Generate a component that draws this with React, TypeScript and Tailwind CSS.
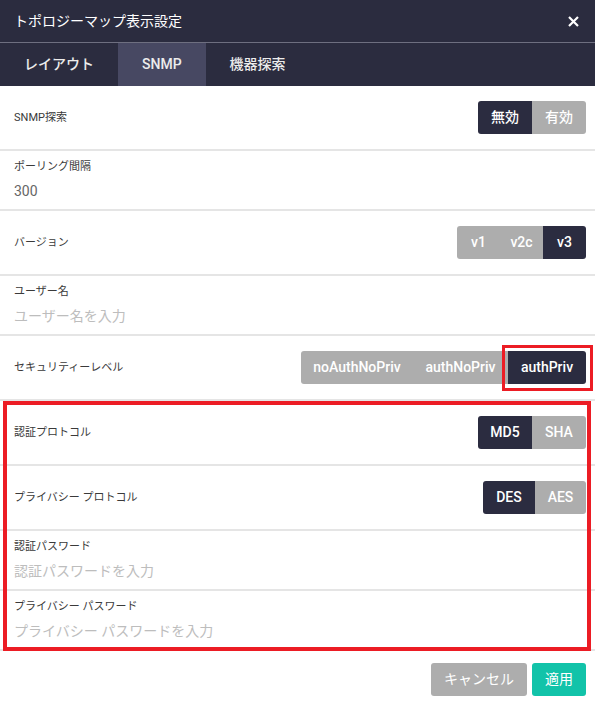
import { useState } from "react";

const font = { fontFamily: 'Roboto, "Noto Sans CJK JP", sans-serif' };

function Toggle({
  options,
  value,
  onChange,
  widths,
}: {
  options: string[];
  value: string;
  onChange: (v: string) => void;
  widths: string[];
}) {
  return (
    <div className="flex h-[33px] overflow-hidden rounded-[3px]">
      {options.map((opt, i) => (
        <button
          key={opt}
          onClick={() => onChange(opt)}
          className={`${widths[i]} flex items-center justify-center text-[14px] font-medium text-white ${
            value === opt ? "bg-[#2b2c40]" : "bg-[#adadad]"
          }`}
        >
          {opt}
        </button>
      ))}
    </div>
  );
}

function ToggleRow({ label, children }: { label: string; children: React.ReactNode }) {
  return (
    <div className="flex h-[65px] items-center justify-between border-b-2 border-[#e5e5e5] pl-[14px] pr-[9px]">
      <span className="pt-[2px] text-[11px] text-[#3a3a3a]">{label}</span>
      {children}
    </div>
  );
}

function InputRow({ label, placeholder, value }: { label: string; placeholder?: string; value?: string }) {
  return (
    <div className="flex h-[60px] flex-col border-b-2 border-[#e5e5e5] px-[14px] pt-[8px]">
      <span className="text-[11px] leading-[16px] text-[#3a3a3a]">{label}</span>
      <input
        className="mt-[3px] h-[26px] bg-transparent text-[14px] text-[#666] outline-none placeholder:text-[#bdbdbd]"
        placeholder={placeholder}
        defaultValue={value}
        style={font}
      />
    </div>
  );
}

function App() {
  const [tab, setTab] = useState("SNMP");
  const [search, setSearch] = useState("無効");
  const [version, setVersion] = useState("v3");
  const [level, setLevel] = useState("authPriv");
  const [auth, setAuth] = useState("MD5");
  const [priv, setPriv] = useState("DES");

  return (
    <div className="relative h-[707px] w-[595px] overflow-hidden bg-white" style={font}>
      <div className="flex h-[43px] items-center justify-between border-b border-[#6e6f80] bg-[#2b2c3f] pl-[14px] pr-[16px]">
        <span className="text-[14px] text-white">トポロジーマップ表示設定</span>
        <svg width="11" height="11" viewBox="0 0 11 11">
          <path d="M1 1 L10 10 M10 1 L1 10" stroke="white" strokeWidth="2.2" />
        </svg>
      </div>
      <div className="flex h-[43px] bg-[#2b2c3f]">
        {["レイアウト", "SNMP", "機器探索"].map((t) => (
          <button
            key={t}
            onClick={() => setTab(t)}
            className={`px-[24px] text-[14px] font-medium text-[#ececec] ${
              tab === t ? "bg-[#474862]" : ""
            }`}
          >
            {t}
          </button>
        ))}
      </div>

      <ToggleRow label="SNMP探索">
        <Toggle options={["無効", "有効"]} value={search} onChange={setSearch} widths={["w-[54px]", "w-[54px]"]} />
      </ToggleRow>
      <InputRow label="ポーリング間隔" value="300" />
      <ToggleRow label="バージョン">
        <Toggle
          options={["v1", "v2c", "v3"]}
          value={version}
          onChange={setVersion}
          widths={["w-[43px]", "w-[43px]", "w-[43px]"]}
        />
      </ToggleRow>
      <InputRow label="ユーザー名" placeholder="ユーザー名を入力" />
      <ToggleRow label="セキュリティーレベル">
        <Toggle
          options={["noAuthNoPriv", "authNoPriv", "authPriv"]}
          value={level}
          onChange={setLevel}
          widths={["w-[112px]", "w-[95px]", "w-[78px]"]}
        />
      </ToggleRow>
      <ToggleRow label="認証プロトコル">
        <Toggle options={["MD5", "SHA"]} value={auth} onChange={setAuth} widths={["w-[54px]", "w-[54px]"]} />
      </ToggleRow>
      <ToggleRow label="プライバシー プロトコル">
        <Toggle options={["DES", "AES"]} value={priv} onChange={setPriv} widths={["w-[52px]", "w-[51px]"]} />
      </ToggleRow>
      <InputRow label="認証パスワード" placeholder="認証パスワードを入力" />
      <InputRow label="プライバシー パスワード" placeholder="プライバシー パスワードを入力" />

      <div className="flex justify-end gap-[5px] pr-[9px] pt-[12px]">
        <button className="h-[33px] w-[96px] rounded-[3px] bg-[#adadad] text-[14px] text-white">キャンセル</button>
        <button className="h-[33px] w-[54px] rounded-[3px] bg-[#12c3a9] text-[14px] text-white">適用</button>
      </div>

      {/* annotation boxes */}
      <div className="pointer-events-none absolute left-[502px] top-[345px] h-[46px] w-[91px] border-[3px] border-[#ec1c24]" />
      <div className="pointer-events-none absolute left-[3px] top-[401px] h-[250px] w-[588px] border-4 border-[#ec1c24]" />
    </div>
  );
}

export default App;
